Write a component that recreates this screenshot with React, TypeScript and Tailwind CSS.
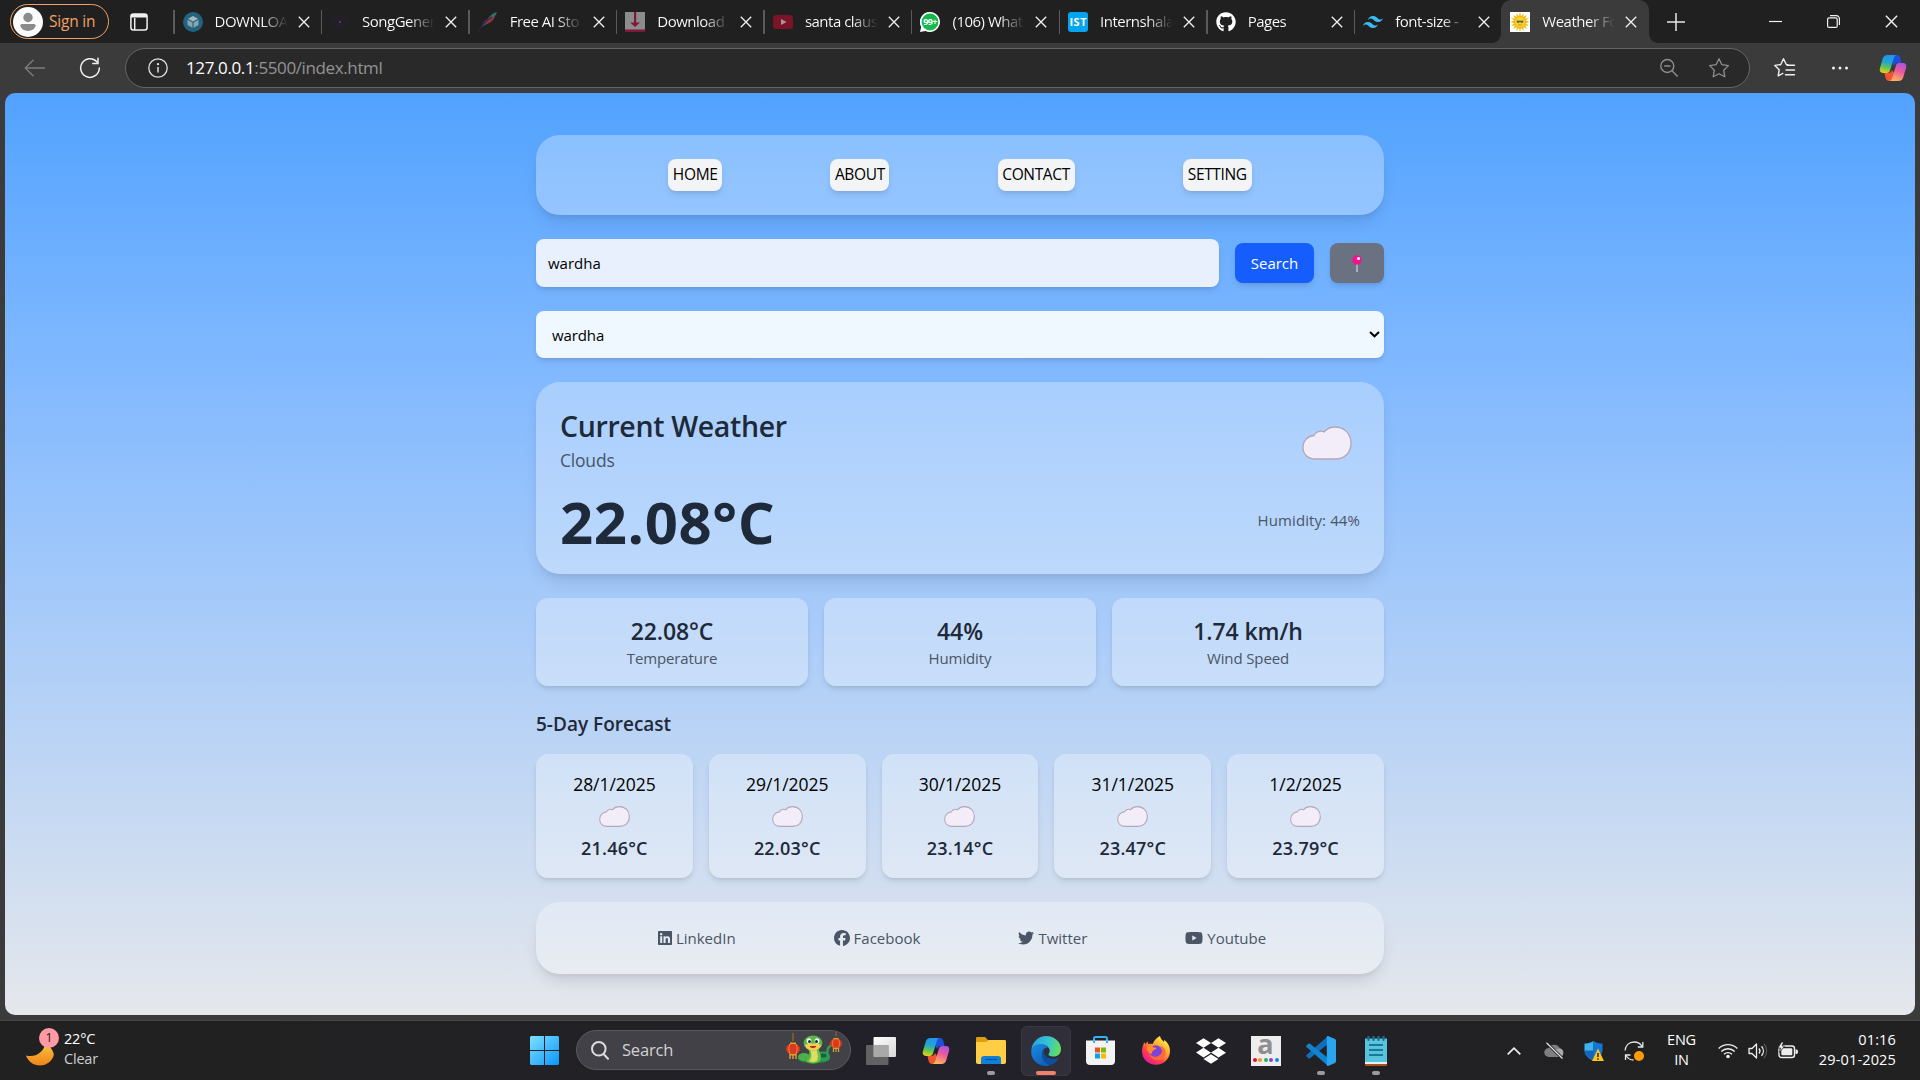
import React from "react";
import { FaLinkedin, FaFacebook, FaTwitter, FaYoutube, FaGithub, FaDropbox } from "react-icons/fa6";
import { SiTailwindcss } from "react-icons/si";

/* ---------- shared drawings ---------- */

function CopilotIcon({ className, id }: { className: string; id: string }) {
  return (
    <svg className={className} viewBox="0 0 28 28" fill="none">
      <defs>
        <linearGradient id={id + "a"} x1="8" y1="1" x2="4" y2="19" gradientUnits="userSpaceOnUse">
          <stop offset="0" stopColor="#2294f0" />
          <stop offset="0.4" stopColor="#21a8c8" />
          <stop offset="0.7" stopColor="#6cc64e" />
          <stop offset="1" stopColor="#f2d20f" />
        </linearGradient>
        <linearGradient id={id + "b"} x1="24" y1="8" x2="17" y2="27" gradientUnits="userSpaceOnUse">
          <stop offset="0" stopColor="#a052ee" />
          <stop offset="0.5" stopColor="#ee5a9a" />
          <stop offset="1" stopColor="#ffb35c" />
        </linearGradient>
      </defs>
      <path d="M14 1h4.200c1.600 0 2.600 1 3 2.500L22.500 9h-3.500c-2 0-3.200 1.200-3.800 3L13 8z" fill="#1d4fd8" />
      <path d="M14 27H10c-1.600 0-2.700-1-3.200-2.500L5.400 19h4c2 0 3-1.200 3.600-3l2.500 4z" fill="#f0552f" />
      <path d="M8.500 1H18c-1.800.2-2.700 1.500-3.300 3.500L11 16.500C10.400 18.300 9.400 19 7.600 19H4C1.300 19 .2 17 .9 14.300L3.800 4.500C4.500 2.200 6 1 8.500 1z" fill={`url(#${id}a)`} />
      <path d="M19.500 27H10c1.800-.2 2.700-1.500 3.300-3.500L17 11.500C17.600 9.700 18.600 9 20.400 9H24c2.700 0 3.800 2 3.100 4.700l-2.900 9.800c-.7 2.300-2.200 3.500-4.700 3.500z" fill={`url(#${id}b)`} />
    </svg>
  );
}

function Cloud({ className, stroke }: { className: string; stroke: number }) {
  return (
    <svg className={className} viewBox="0 0 50 34">
      <path
        d="M13.500 33C5.500 33 1 28 1 21.500 1 14.500 6 9.800 12 9.500 13.500 5.500 19 4.300 22 6 25 2.300 29.500 1 33 1c9.500 0 16 7 16 16 0 10-6.500 16-15.500 16z"
        fill="#f2edf8"
        stroke="#b5a6b8"
        strokeWidth={stroke}
      />
    </svg>
  );
}

function CloseX({ size = "size-[12px]" }: { size?: string }) {
  return (
    <svg className={size} viewBox="0 0 12 12" stroke="#f2f2f2" strokeWidth="1.300">
      <path d="M.8.800l10.400 10.400M11.200.800L.8 11.200" />
    </svg>
  );
}

/* ---------- browser chrome ---------- */

const favicons: Record<string, React.ReactNode> = {
  cube: (
    <svg viewBox="0 0 20 20" className="size-5">
      <circle cx="10" cy="10" r="10" fill="#22647f" />
      <path d="M10 4l5 2.700-5 2.700-5-2.700z" fill="#a5b9c1" />
      <path d="M4.500 7.800l4.900 2.700v5.300l-4.900-2.700zM15.500 7.800l-4.900 2.700v5.300l4.900-2.700z" fill="#8ba5b0" />
    </svg>
  ),
  dot: (
    <svg viewBox="0 0 20 20" className="size-5">
      <circle cx="10" cy="10" r="8" fill="#231f27" />
      <circle cx="10" cy="10" r="1" fill="#8a2c9c" />
    </svg>
  ),
  feather: (
    <svg viewBox="0 0 20 20" className="size-5">
      <path d="M19 0c-4 1-8 4-9.500 8l3.500-.5C16 5.500 18 3 19 0z" fill="#2d7466" />
      <path d="M17 4.500C12 5 6 8 4.500 13.500c5-1 10.500-4 12.500-9z" fill="#9c3340" />
      <path d="M10 7c-3 1.500-5.500 4.500-6 7.500l2-.5z" fill="#31569a" />
      <path d="M14 5C8 9 3 14 .5 19.500" stroke="#33243f" fill="none" strokeWidth="1.200" />
    </svg>
  ),
  download: (
    <svg viewBox="0 0 20 20" className="size-5">
      <path d="M0 0h20v20H0z" fill="#8c8c8c" />
      <path d="M0 17.500h20V20H0zM9 0h2.200v10.500H15L10 15 5.200 10.500H9z" fill="#80163c" />
    </svg>
  ),
  youtube: (
    <svg viewBox="0 0 20 20" className="size-5">
      <rect y="3" width="20" height="14" rx="3.500" fill="#7c1428" />
      <path d="M8 7l5.500 3L8 13z" fill="#a9989b" />
    </svg>
  ),
  whatsapp: (
    <svg viewBox="0 0 20 20" className="size-5">
      <path d="M10 0a10 10 0 11-4.600 18.900L0 20l1.200-5A10 10 0 0110 0z" fill="#fff" />
      <circle cx="10" cy="10" r="8.400" fill="#16b84e" />
      <text x="10" y="13.300" fontSize="9" fontWeight="700" fontFamily="Open Sans, sans-serif" fill="#fff" textAnchor="middle" letterSpacing="-.6">99+</text>
    </svg>
  ),
  ist: (
    <svg viewBox="0 0 20 20" className="size-5">
      <rect width="20" height="20" rx="3" fill="#05a4ee" />
      <text x="10" y="14.300" fontSize="11" fontWeight="700" fontFamily="Open Sans, sans-serif" fill="#fff" textAnchor="middle" textLength="17">IST</text>
    </svg>
  ),
  github: <FaGithub className="size-5 text-white" />,
  tailwind: <SiTailwindcss className="size-5 text-[#38bdf8]" />,
  sun: (
    <svg viewBox="0 0 20 20" className="size-5">
      <path d="M0 0h20v20H0z" fill="#fff" />
      <path d="M10 .3l1.200 4L13.500 1l-.2 3.900L17 3l-2 3.500 4-.2-3.300 2.300L19.700 10l-4 1.300 3.300 2.500-4-.3 2 3.500-3.600-2 .1 4-2.300-3.300L10 19.700l-1.200-4L6.500 19l.2-4L3 17l2-3.500-4 .3 3.300-2.500L.3 10l4-1.400L1 6.300l4 .2L3 3l3.700 1.900L6.500 1l2.300 3.300z" fill="#eeb818" />
      <circle cx="10" cy="10" r="5.200" fill="#fbd024" />
      <path d="M6.500 8.800h7v.8l-1 1.200h-1.500L10 9.700l-1 1.100H7.500l-1-1.200z" fill="#3d6273" />
      <path d="M8.300 12.500c1 .8 2.400.8 3.400 0" stroke="#b87c14" fill="none" strokeWidth=".7" />
    </svg>
  ),
};

const tabs = [
  ["cube", "DOWNLOAD"],
  ["dot", "SongGener"],
  ["feather", "Free AI Sto"],
  ["download", "Download"],
  ["youtube", "santa claus"],
  ["whatsapp", "(106) What"],
  ["ist", "Internshala"],
  ["github", "Pages"],
  ["tailwind", "font-size -"],
];

function TabBody({ icon, title, active }: { icon: string; title: string; active?: boolean }) {
  return (
    <>
      {favicons[icon]}
      <span
        className={
          "mb-[2px] ml-3 h-5 w-[73px] overflow-hidden text-[15px] leading-5 tracking-[-0.500px] whitespace-nowrap " +
          (active
            ? "bg-linear-to-r from-white from-65% to-[#3b3b3b] bg-clip-text text-transparent"
            : "bg-linear-to-r from-white from-65% to-[#202020] bg-clip-text text-transparent")
        }
      >
        {title}
      </span>
      <span className="ml-[10px] flex">
        <CloseX />
      </span>
    </>
  );
}

function TabStrip() {
  return (
    <div className="flex h-[43px] items-stretch bg-[#202020]">
      <div className="flex w-[173px] shrink-0 items-center pl-[10px]">
        <div className="flex h-[35px] w-[99px] items-center rounded-full border-[1.500px] border-[#f0a165] pl-[2px]">
          <svg viewBox="0 0 30 30" className="size-[30px]">
            <circle cx="15" cy="15" r="15" fill="#fbfbfb" />
            <circle cx="15" cy="10.500" r="4.700" fill="#8b8b8b" />
            <path d="M9 17h12c1.200 0 1.800.7 1.600 1.800-.6 3-3.600 5.200-7.600 5.200s-7-2.200-7.600-5.200C7.200 17.700 7.800 17 9 17z" fill="#8b8b8b" />
          </svg>
          <span className="ml-[6px] text-[15.500px] tracking-[-0.200px] text-[#f0a165]">Sign in</span>
        </div>
        <svg viewBox="0 0 18 18" className="ml-[21px] size-[18px]" fill="none" stroke="#f0f0f0" strokeWidth="1.500">
          <rect x=".9" y=".9" width="16.200" height="16.200" rx="2.500" />
          <path d="M1 3.300h16M1 2.300h16" strokeWidth="2.400" />
          <path d="M4.700 5v12" />
        </svg>
      </div>
      {tabs.map(([icon, title]) => (
        <div key={title} className="flex w-[147.600px] shrink-0 items-center">
          <div className="mr-2 h-6 w-[1.500px] bg-[#5a5a5a]" />
          <TabBody icon={icon} title={title} />
        </div>
      ))}
      <div className="relative flex w-[148px] shrink-0 items-center rounded-t-[10px] bg-[#3b3b3b] pl-[9px]">
        <svg viewBox="0 0 10 10" className="absolute bottom-0 -left-[10px] size-[10px]">
          <path d="M10 0v10H0C6 10 10 6 10 0z" fill="#3b3b3b" />
        </svg>
        <svg viewBox="0 0 10 10" className="absolute -right-[10px] bottom-0 size-[10px]">
          <path d="M0 0v10h10C4 10 0 6 0 0z" fill="#3b3b3b" />
        </svg>
        <TabBody icon="sun" title="Weather Fo" active />
      </div>
      <div className="flex flex-1 items-center">
        <svg viewBox="0 0 18 18" className="ml-[18px] size-[18px]" stroke="#e8e8e8" strokeWidth="1.500">
          <path d="M9 0v18M0 9h18" />
        </svg>
        <div className="ml-auto flex items-center gap-[45px] pr-[22px]">
          <svg viewBox="0 0 13 13" className="size-[13px]" stroke="#f0f0f0" strokeWidth="1.200">
            <path d="M0 6.500h13" />
          </svg>
          <svg viewBox="0 0 13 13" className="size-[13px]" fill="none" stroke="#f0f0f0" strokeWidth="1.200">
            <rect x=".6" y="2.800" width="9.600" height="9.600" rx="1.500" />
            <path d="M3 .7h6.500a2.900 2.900 0 012.900 2.900V10" />
          </svg>
          <CloseX size="size-[13px]" />
        </div>
      </div>
    </div>
  );
}

function Toolbar() {
  return (
    <div className="flex h-[50px] items-center bg-[#3b3b3b]">
      <svg viewBox="0 0 22 18" className="ml-6 h-[18px] w-[22px]" fill="none" stroke="#7e7e7e" strokeWidth="1.300">
        <path d="M9.500.8L1.300 9l8.200 8.200M1.300 9H21" />
      </svg>
      <svg viewBox="0 0 22 22" className="ml-[33px] size-[22px]" fill="none" stroke="#f0f0f0" strokeWidth="1.500" strokeLinecap="round">
        <path d="M20.300 11A9.300 9.300 0 1117.800 4.700M19 1.300v5.200h-5.200" />
      </svg>
      <div className="ml-[24px] flex h-10 w-[1625px] items-center rounded-full border border-[#666] bg-[#292929] pr-[19px] pl-[22px]">
        <svg viewBox="0 0 20 20" className="size-5" fill="none" stroke="#e0e0e0" strokeWidth="1.300">
          <circle cx="10" cy="10" r="9.200" />
          <path d="M10 9v5.500" strokeWidth="1.500" />
          <circle cx="10" cy="6.200" r=".5" fill="#e0e0e0" />
        </svg>
        <span className="ml-[18px] text-[17px] tracking-[-0.380px] text-[#949494]">
          <span className="text-white">127.0.0.1</span>:5500/index.html
        </span>
        <svg viewBox="0 0 20 20" className="ml-auto size-5" fill="none" stroke="#8f8f8f" strokeWidth="1.400">
          <circle cx="8.300" cy="8" r="6.500" />
          <path d="M13 12.800l5.600 5.700M5.200 8h6.200" />
        </svg>
        <svg viewBox="0 0 22 22" className="ml-[29px] size-[22px]" fill="none" stroke="#8f8f8f" strokeWidth="1.300" strokeLinejoin="round">
          <path d="M11 1.700l2.900 6 6.500.9-4.700 4.600 1.100 6.600L11 16.700l-5.800 3.100 1.100-6.600-4.700-4.600 6.500-.9z" />
        </svg>
      </div>
      <svg viewBox="0 0 22 22" className="ml-6 size-[22px]" fill="none" stroke="#f0f0f0" strokeWidth="1.400" strokeLinejoin="round" strokeLinecap="round">
        <path d="M14 7.800l-1.700-.3L9.500 1.800 6.800 7.500l-6 .9 4.400 4.300-1 6.200 4.600-2.500M13 8.300h7.500M12 13h8.500M11.500 17.700h9" />
      </svg>
      <svg viewBox="0 0 18 4" className="ml-[35px] h-1 w-[18px]" fill="#f0f0f0">
        <circle cx="2.500" cy="2" r="1.500" />
        <circle cx="9" cy="2" r="1.500" />
        <circle cx="15.500" cy="2" r="1.500" />
      </svg>
      <CopilotIcon className="ml-[30px] size-[28px]" id="tb" />
    </div>
  );
}

/* ---------- weather page ---------- */

const days = [
  ["28/1/2025", "21.46°C"],
  ["29/1/2025", "22.03°C"],
  ["30/1/2025", "23.14°C"],
  ["31/1/2025", "23.47°C"],
  ["1/2/2025", "23.79°C"],
];

const navButton = "flex h-8 items-center justify-center rounded-lg bg-gray-100 text-[15.500px] tracking-[-0.350px] text-black shadow-md";

function WeatherPage() {
  return (
    <div className="mx-[5px] flex h-[922px] flex-col items-center rounded-[10px] bg-linear-to-b from-blue-400 to-gray-200 pt-[42px]">
      <div className="flex w-[848px] flex-col gap-6">
        <nav className="flex h-20 items-center justify-evenly rounded-3xl bg-white/30 px-6 shadow-lg">
          <button className={navButton + " w-[54px]"}>HOME</button>
          <button className={navButton + " w-[59px]"}>ABOUT</button>
          <button className={navButton + " w-[77px]"}>CONTACT</button>
          <button className={navButton + " w-[69px]"}>SETTING</button>
        </nav>

        <div className="flex items-center gap-4">
          <div className="flex h-12 flex-1 items-center rounded-lg bg-[#e8f0fe] px-3 text-[15px] text-black shadow-md">wardha</div>
          <button className="h-10 w-[79px] rounded-lg bg-blue-600 text-[15px] text-white shadow-md">Search</button>
          <button className="flex h-10 w-[54px] items-center justify-center rounded-lg bg-gray-500 shadow-md">
            <svg viewBox="0 0 10 17" className="h-[17px] w-[10px]">
              <path d="M4 8h2v9H4z" fill="#a9adb5" />
              <circle cx="5" cy="5" r="4.700" fill="#f5118f" />
              <circle cx="6.500" cy="3.500" r="1.500" fill="#fff" />
            </svg>
          </button>
        </div>

        <div className="flex h-[47px] items-center justify-between rounded-lg bg-[#f0f8ff] pr-1 pl-4 text-[15px] tracking-[-0.100px] text-black shadow-md">
          <span className="pt-px">wardha</span>
          <svg viewBox="0 0 11 7" className="h-[7px] w-[11px]" fill="none" stroke="#000" strokeWidth="2">
            <path d="M1 1l4.500 4.300L10 1" />
          </svg>
        </div>

        <section className="flex h-48 flex-col rounded-3xl bg-white/30 p-6 shadow-lg">
          <div className="flex h-16 items-center justify-between">
            <div className="pt-[5px]">
              <h2 className="text-[28.500px] leading-9 font-semibold tracking-[-0.350px] text-gray-800">Current Weather</h2>
              <p className="pt-[3px] text-[17.500px] leading-[26px] tracking-[-0.200px] text-gray-600">Clouds</p>
            </div>
            <div className="flex h-16 w-[66px] items-center justify-center pt-[9px]">
              <Cloud className="h-[34px] w-[50px]" stroke={1.300} />
            </div>
          </div>
          <div className="mt-5 flex h-[60px] items-center justify-between">
            <p className="pt-[4px] text-[58px] leading-[60px] font-bold tracking-[0.600px] text-gray-800">22.08°C</p>
            <p className="text-[15px] tracking-[0.100px] text-gray-600">Humidity: 44%</p>
          </div>
        </section>

        <div className="grid grid-cols-3 gap-4">
          {[
            ["22.08°C", "Temperature"],
            ["44%", "Humidity"],
            ["1.74 km/h", "Wind Speed"],
          ].map(([value, label]) => (
            <div key={label} className="rounded-xl bg-white/30 p-4 text-center shadow-md">
              <p className="mt-px -mb-px text-[23px] leading-8 font-semibold tracking-[-0.100px] text-gray-800">{value}</p>
              <p className="text-[15px] leading-6 tracking-[-0.120px] text-gray-600">{label}</p>
            </div>
          ))}
        </div>

        <section>
          <h3 className="mb-4 pt-px text-[19px] leading-[27px] font-semibold text-gray-800">5-Day Forecast</h3>
          <div className="grid grid-cols-5 gap-4">
            {days.map(([date, temp]) => (
              <div key={date} className="flex h-[124px] flex-col items-center rounded-xl bg-white/30 p-4 shadow-md">
                <p className="pt-px text-[17.500px] leading-[27px] tracking-[-0.050px] text-black">{date}</p>
                <Cloud className="mt-2 h-[22px] w-[33px]" stroke={1.700} />
                <p className="mt-[7px] text-[18px] leading-7 font-semibold tracking-[0.200px] text-gray-800">{temp}</p>
              </div>
            ))}
          </div>
        </section>

        <footer className="flex h-[72px] items-center justify-center gap-[98px] rounded-3xl bg-white/30 pl-1 text-[15px] text-gray-600 shadow-lg">
          <a className="flex items-center gap-1">
            <FaLinkedin className="h-4 w-[14px]" /> LinkedIn
          </a>
          <a className="flex items-center gap-1">
            <FaFacebook className="size-4" /> Facebook
          </a>
          <a className="flex items-center gap-1">
            <FaTwitter className="size-4" /> Twitter
          </a>
          <a className="flex items-center gap-1">
            <FaYoutube className="h-4 w-[18px]" /> Youtube
          </a>
        </footer>
      </div>
    </div>
  );
}

/* ---------- taskbar ---------- */

function Lantern({ x, y, s }: { x: number; y: number; s: number }) {
  return (
    <g transform={`translate(${x} ${y}) scale(${s})`}>
      <path d="M0-16v8" stroke="#a8741f" strokeWidth="1" />
      <path d="M-3 5v5M0 5v5M3 5v5" stroke="#d59b2e" strokeWidth="1.500" />
      <ellipse cx="0" cy="0" rx="7" ry="5.800" fill="#d93a1d" />
      <path d="M-3-5c-1.500 3-1.500 7 0 10M3-5c1.500 3 1.500 7 0 10" stroke="#f7823c" fill="none" />
      <path d="M-3-6.500h6v1.500h-6zM-3 5h6v1.500h-6z" fill="#e0a02c" />
    </g>
  );
}

function Snake() {
  return (
    <svg viewBox="0 0 58 34" className="h-[34px] w-[58px]">
      <Lantern x={8} y={17} s={1} />
      <Lantern x={51} y={11.500} s={0.850} />
      <path d="M38 26c7-2 2-9 7-12" stroke="#2f9e52" strokeWidth="2.500" fill="none" strokeLinecap="round" />
      <ellipse cx="29" cy="26.500" rx="16" ry="5" fill="#23874a" />
      <ellipse cx="19" cy="25" rx="6" ry="4" fill="#4fae4a" />
      <ellipse cx="38" cy="24.500" rx="7" ry="5" fill="#2c9a58" />
      <ellipse cx="38" cy="23.500" rx="3.500" ry="2" fill="#14623d" />
      <path d="M23 14h10c0 5 5 9 2 15-3 3.500-12 3-14 0 6-3 3-9 2-15z" fill="#6abf45" />
      <path d="M25 16h6c1 5 3 7 1 13-3 1.500-6 1-8 0 4-4 2-8 1-13z" fill="#dcdf63" />
      <ellipse cx="28" cy="11" rx="9.500" ry="7.500" fill="#58b947" />
      <path d="M20 13c4-2 12-2 16 0-1 4-4 5.500-8 5.500s-7-1.500-8-5.500z" fill="#f4cd52" />
      <ellipse cx="24" cy="9" rx="2.300" ry="2.700" fill="#fff" />
      <ellipse cx="32" cy="9" rx="2.300" ry="2.700" fill="#fff" />
      <circle cx="24.500" cy="9.500" r="1.500" fill="#2a2a2a" />
      <circle cx="31.500" cy="9.500" r="1.500" fill="#2a2a2a" />
      <path d="M25 14.500c2 1.500 4 1.500 6 0z" fill="#b42b20" stroke="#b42b20" />
    </svg>
  );
}

function EdgeIcon() {
  return (
    <svg viewBox="0 0 30 30" className="size-[30px]">
      <defs>
        <linearGradient id="eg1" x1="3" y1="6" x2="30" y2="14" gradientUnits="userSpaceOnUse">
          <stop offset="0" stopColor="#2aa6e6" />
          <stop offset="0.500" stopColor="#36c5d0" />
          <stop offset="1" stopColor="#69e04f" />
        </linearGradient>
        <linearGradient id="eg2" x1="2" y1="10" x2="16" y2="30" gradientUnits="userSpaceOnUse">
          <stop offset="0" stopColor="#1b86dc" />
          <stop offset="1" stopColor="#0d5cb8" />
        </linearGradient>
      </defs>
      <path d="M.4 13.500C1.300 6 7.500 0 15 0c8.500 0 15 6 15 13 0 5-3.500 7.500-7.500 7.500-3 0-5-1-5-2 0-.8 1.200-1.500 1.200-3.700 0-3.300-3.200-6-8-6C5.500 8.800 1.500 11 .4 13.500z" fill="url(#eg1)" />
      <path d="M.2 15.500c0-4.500 4-7.500 9.600-7.500 4 0 6.600 1.500 7.700 3.500-3-.6-6.500 2-6.500 7 0 6 5 10 9 10.500-1.500.7-3 1-5 1C6.500 30 0 23.500.2 15.500z" fill="url(#eg2)" />
      <path d="M14.200 12c-1.900 1.300-3.200 3.500-3.200 6.500 0 5.500 4.500 10.200 9.500 10.200 3-1.200 5.500-3.200 7-6.200.3-.6-.2-.9-.7-.6-1.300.7-3 1.100-4.800 1.100-5 0-9-3-9-7 0-1.600.4-3 1.200-4z" fill="#0c4f9e" />
    </svg>
  );
}

function FirefoxIcon() {
  return (
    <svg viewBox="0 0 30 30" className="size-[30px]">
      <defs>
        <linearGradient id="ff" x1="24" y1="3" x2="6" y2="27" gradientUnits="userSpaceOnUse">
          <stop offset="0" stopColor="#fff04a" />
          <stop offset="0.350" stopColor="#ffa52a" />
          <stop offset="0.700" stopColor="#ff3d4d" />
          <stop offset="1" stopColor="#e5189d" />
        </linearGradient>
      </defs>
      <path d="M19 0c.5 2.500 2 4 4 6 .2-1 .2-1.500 0-2.300C27 6.500 29 10.500 29 15c0 8-6.300 13.700-14 13.700S1 23 1 15.500c0-4 1-7 2.700-9.500 0 1 .2 1.800.6 2.300C5 7 5.700 6.200 6.700 5.500c-.1 1 .1 1.900.7 2.500 1.500-.5 3-.4 4.300 0C13.500 3.500 16 1.500 19 0z" fill="url(#ff)" />
      <circle cx="14.800" cy="15.500" r="6.300" fill="#7d43d8" />
      <path d="M6 10c2.500-1.500 5-.5 6.500 1.500l3 .3c0 1.500-2.500 2.200-3.500 2.700-1 1-.5 2.500-2 3.500-2.500-1-4.500-4-4-8z" fill="#ff8b2d" />
      <path d="M8 17c2 4 7 5 11 2 3-2.500 2.500-7-.5-9.500 6 1 8 8 4 12.500-5 4.500-13 2-14.500-5z" fill="#ff6a3c" />
    </svg>
  );
}

const dot = <span className="absolute bottom-[1px] h-1 w-2 rounded-full bg-[#9b9ba0]" />;

function Slot({ children, mark, active }: { children: React.ReactNode; mark?: React.ReactNode; active?: boolean }) {
  return (
    <div className="flex h-[50px] w-[55px] items-center justify-center">
      <div
        className={
          active
            ? "relative flex h-[50px] w-[50px] items-center justify-center rounded-md border border-[#3a3943] bg-[#302f39]"
            : "relative flex h-[50px] w-[50px] items-center justify-center"
        }
      >
        {children}
        {mark}
      </div>
    </div>
  );
}

function Taskbar() {
  return (
    <div className="flex h-[60px] items-center border-t border-[#454545] bg-linear-to-r from-[#212121] from-10% via-[#22212a] via-50% to-[#212121] to-90%">
      <div className="flex w-[517px] items-center pl-[26px]">
        <div className="relative mb-[3px] h-[38px] w-[34px]">
          <svg viewBox="0 0 34 38" className="size-full">
            <defs>
              <linearGradient id="moon" x1="0" y1="15" x2="0" y2="36" gradientUnits="userSpaceOnUse">
                <stop offset="0" stopColor="#f8c33a" />
                <stop offset="1" stopColor="#f07f1c" />
              </linearGradient>
            </defs>
            <path d="M0 25.500c9 2.500 18-3 19-12 6 3 8.500 8 8.800 11C27 30.500 21 35.500 14 35.500 7.500 35.500 2 31.500 0 25.500z" fill="url(#moon)" />
          </svg>
          <span className="absolute -top-[2px] left-[13px] flex size-5 items-center justify-center rounded-full bg-[#ff99a4] text-[13px] text-[#222]">1</span>
        </div>
        <div className="mb-[3px] ml-1 text-[14.500px] leading-5 tracking-[-0.200px] text-white">
          <p>22°C</p>
          <p className="text-[#cfcfcf]">Clear</p>
        </div>
      </div>

      <Slot>
        <svg viewBox="0 0 29 29" className="size-[29px]">
          <defs>
            <linearGradient id="win" x1="0" y1="0" x2="29" y2="29" gradientUnits="userSpaceOnUse">
              <stop offset="0" stopColor="#7fe0ff" />
              <stop offset="1" stopColor="#0a96fb" />
            </linearGradient>
          </defs>
          <path d="M1 0h13v14H0V1zM15 0h13l1 1v13H15zM0 15h14v14H1l-1-1zM15 15h14v13l-1 1H15z" fill="url(#win)" />
        </svg>
      </Slot>
      <div className="mb-px ml-1 flex h-10 w-[275px] items-center rounded-full border border-[#5a595f] bg-[#424147] pr-[7px] pl-[14px]">
        <svg viewBox="0 0 18 19" className="h-[19px] w-[18px]" fill="none" stroke="#dcdcdc" strokeWidth="2" strokeLinecap="round">
          <circle cx="7.800" cy="7.800" r="6.800" />
          <path d="M12.800 13.200l4.200 4.500" />
        </svg>
        <span className="ml-[13px] text-[16.500px] tracking-[-0.200px] text-[#d2d2d4]">Search</span>
        <span className="ml-auto flex pb-[3px]">
          <Snake />
        </span>
      </div>
      <div className="ml-[2px] flex">
        <Slot>
          <svg viewBox="0 0 30 28" className="h-7 w-[30px]">
            <defs>
              <linearGradient id="tv" x1="0" y1="0" x2="1" y2="1">
                <stop offset="0" stopColor="#fff" />
                <stop offset="1" stopColor="#d8d8d8" />
              </linearGradient>
            </defs>
            <rect x="7.500" width="22.500" height="20" rx="1" fill="url(#tv)" />
            <rect y="8" width="22.500" height="20" rx="1" fill="#6d6d6d" fillOpacity=".85" />
            <path d="M7.500 8h15v12h-15z" fill="#a9a9a9" />
          </svg>
        </Slot>
        <Slot>
          <CopilotIcon className="size-[28px]" id="tk" />
        </Slot>
        <Slot mark={dot}>
          <svg viewBox="0 0 30 27" className="h-[27px] w-[30px]">
            <path d="M0 1.500C0 .5.500 0 1.500 0H9l3 3h16c1.500 0 2 .7 2 2v6H0z" fill="#dd9f0c" />
            <path d="M0 5h10l3-2h15c1.500 0 2 .5 2 2v20c0 1.200-.6 2-2 2H2c-1.400 0-2-.8-2-2z" fill="#ffce45" />
            <path d="M5 27v-5c0-2 1-3 3-3h14c2 0 3 1 3 3v5z" fill="#1180d8" />
            <path d="M9 22.500h12" stroke="#0b559c" strokeWidth="1.300" />
          </svg>
        </Slot>
        <Slot active mark={<span className="absolute bottom-0 h-1 w-5 rounded-full bg-[#f2806a]" />}>
          <EdgeIcon />
        </Slot>
        <Slot>
          <svg viewBox="0 0 29 29" className="size-[29px]">
            <path d="M8 7V2.500C8 1.300 8.500 1 9.500 1h10c1 0 1.500.3 1.500 1.500V7" fill="none" stroke="#2cb5ee" strokeWidth="2" />
            <path d="M0 4.500h29V25c0 2.500-1.500 4-4 4H4c-2.500 0-4-1.500-4-4z" fill="#f3f3f3" />
            <path d="M9 11.500h5v5H9z" fill="#f25022" />
            <path d="M15 11.500h5v5h-5z" fill="#7fba00" />
            <path d="M9 17.500h5v5H9z" fill="#00a4ef" />
            <path d="M15 17.500h5v5h-5z" fill="#ffb900" />
            <path d="M8 7V4.500M21 7V4.500" stroke="#2cb5ee" strokeWidth="2" />
          </svg>
        </Slot>
        <Slot>
          <FirefoxIcon />
        </Slot>
        <Slot>
          <FaDropbox className="size-[30px] text-white" />
        </Slot>
        <Slot>
          <div className="flex size-[30px] flex-col items-center bg-[#ededed]">
            <span className="h-[21px] text-[27px] leading-[16px] font-bold text-[#8f8f8f]">a</span>
            <span className="mt-[1px] flex gap-[1.500px]">
              <i className="size-1 rounded-full bg-[#e81123]" />
              <i className="size-1 rounded-full bg-[#f7941d]" />
              <i className="size-1 rounded-full bg-[#22b35e]" />
              <i className="size-1 rounded-full bg-[#8b3fd9]" />
              <i className="size-1 rounded-full bg-[#1687e0]" />
            </span>
          </div>
        </Slot>
        <Slot mark={dot}>
          <svg viewBox="0 0 30 30" className="size-[30px]">
            <path d="M1 18.500L22 0v8L4 22.200c-.6.400-1.200.4-1.700 0L.7 20.700c-.7-.7-.6-1.500.3-2.200z" fill="#0f6fb8" />
            <path d="M1 11.500L22 30v-8L4 7.800c-.6-.4-1.200-.4-1.700 0L.7 9.300c-.7.700-.6 1.500.3 2.200z" fill="#1383d0" />
            <path d="M22 0l6.500 2.800c1 .5 1.500 1 1.500 2.200v20c0 1.200-.5 1.700-1.500 2.200L22 30c-.8 0-1.200-.6-1.200-1.200V1.200C20.800.6 21.200 0 22 0z" fill="#2aa5f2" />
          </svg>
        </Slot>
        <Slot mark={dot}>
          <svg viewBox="0 0 22 30" className="h-[30px] w-[22px]">
            <path d="M0 26h22v2.500c0 1-.5 1.500-1.500 1.500h-19C.5 30 0 29.500 0 28.500z" fill="#a5541b" />
            <path d="M0 24h22v4H0z" fill="#eee" />
            <path d="M0 2.500h22V26H0z" fill="#57c3dc" />
            <path d="M4 9h14M4 14h14M4 19h14" stroke="#0c5f80" strokeWidth="1.700" />
            <path d="M3.500 0v4M8.500 0v4M13.500 0v4M18.500 0v4" stroke="#14708f" strokeWidth="2.200" strokeLinecap="round" />
          </svg>
        </Slot>
      </div>

      <div className="ml-auto flex items-center pr-[24px]">
        <svg viewBox="0 0 14 8" className="h-2 w-[14px]" fill="none" stroke="#eee" strokeWidth="1.700">
          <path d="M.7 7.300L7 1.200l6.300 6.100" />
        </svg>
        <svg viewBox="0 0 20 17" className="ml-[23px] h-[17px] w-5">
          <path d="M5 15a4.500 4.500 0 01-.5-9A6.500 6.500 0 0116 6.500 4.400 4.400 0 0116 15z" fill="#7e7e80" />
          <path d="M9 8l7-1.500a4.400 4.400 0 010 8.500h-1z" fill="#a9a9ab" />
          <path d="M2.500.8l16 15.700" stroke="#212121" strokeWidth="3" />
          <path d="M2.500.8l16 15.700" stroke="#ddd" strokeWidth="1.300" />
        </svg>
        <svg viewBox="0 0 20 20" className="ml-5 size-5">
          <path d="M9.500 0C6.500 2 3.500 2.500.5 2.500V9c0 5 4 9 9 10.500z" fill="#3cb4f2" />
          <path d="M9.500 0c3 2 6 2.500 9 2.500V9c0 5-4 9-9 10.500z" fill="#1277d4" />
          <path d="M.5 9.500h9v10C4.500 18 1 14.500.5 9.500z" fill="#1565bf" />
          <path d="M14 7.500L20 20H8z" fill="#fcc419" />
          <path d="M14 12v4M14 17.200v1.500" stroke="#222" strokeWidth="1.500" />
        </svg>
        <svg viewBox="0 0 20 20" className="ml-5 size-5" fill="none" stroke="#e6e6e6" strokeWidth="1.300">
          <path d="M1 9.500C1.500 4.500 5 1 10 1c3.500 0 6.500 1.500 8 4.500M18.800 1v5h-5M1.500 19v-5h5M2 14.500c1.500 2.500 4 4.500 7.500 4.500" />
          <circle cx="15" cy="15" r="5" fill="#ff9a08" stroke="none" />
        </svg>
        <div className="mb-px ml-[21px] w-[33px] text-center text-[14.500px] leading-5 tracking-[-0.200px] text-white">
          <p>ENG</p>
          <p>IN</p>
        </div>
        <svg viewBox="0 0 20 16" className="ml-[20px] h-4 w-5" fill="none" stroke="#eee" strokeWidth="1.400">
          <path d="M.7 5.500a13.200 13.200 0 0118.600 0M3.300 8.500a9.500 9.500 0 0113.400 0M6 11.300a5.700 5.700 0 018 0" />
          <circle cx="10" cy="13.500" r="1.800" fill="#eee" stroke="none" />
        </svg>
        <svg viewBox="0 0 20 16" className="ml-[10px] h-4 w-5" fill="none" stroke="#eee" strokeWidth="1.300" strokeLinejoin="round">
          <path d="M1 5.500h3L8.500 1v14L4 10.500H1zM11 5.500c1.200 1.500 1.200 3.500 0 5M13.500 3.200c2.500 2.800 2.500 6.800 0 9.600" />
          <path d="M16 1c3.500 4 3.500 10 0 14" stroke="#555" />
        </svg>
        <svg viewBox="0 0 20 17" className="ml-[10px] h-[17px] w-5">
          <rect x="1" y="4" width="15.500" height="11.500" rx="2.500" fill="none" stroke="#eee" strokeWidth="1.400" />
          <rect x="3.300" y="6.200" width="11" height="7" rx="1" fill="#eee" />
          <path d="M17.500 7.500c2 0 2.500.5 2.500 2.200s-.5 2.300-2.500 2.300z" fill="#eee" />
          <path d="M3.500 0L0 6h2.500L1.500 10.500 6.500 4H4l1.500-4z" fill="#eee" stroke="#212121" strokeWidth=".7" />
        </svg>
        <div className="mb-[2px] ml-[15px] w-[83px] text-right text-[14.500px] leading-5 tracking-[0.150px] whitespace-nowrap text-white">
          <p>01:16</p>
          <p>29-01-2025</p>
        </div>
      </div>
    </div>
  );
}

export default function App() {
  return (
    <div className="h-[1080px] w-[1920px] overflow-hidden bg-[#3b3b3b] font-['Open_Sans','Noto_Sans',sans-serif]">
      <TabStrip />
      <Toolbar />
      <WeatherPage />
      <div className="h-[5px]" />
      <Taskbar />
    </div>
  );
}
